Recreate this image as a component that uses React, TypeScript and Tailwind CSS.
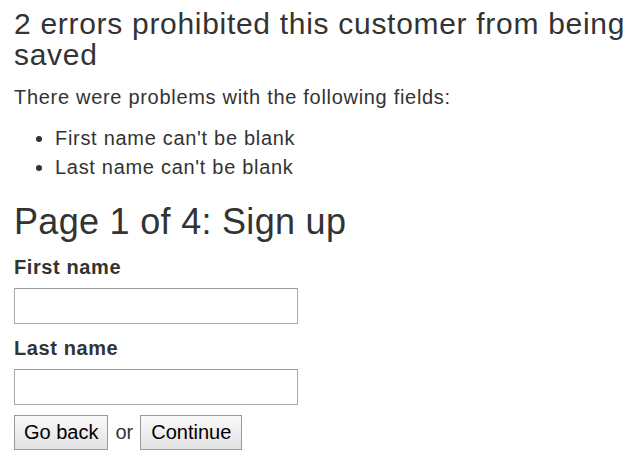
export default function App() {
  return (
    <div className="min-h-[467px] bg-white px-[14px] text-[#333] font-['Liberation_Sans',Arial,sans-serif]">
      <h1 className="pt-[8px] text-[30px] leading-[31px] tracking-[0.7px]">
        2 errors prohibited this customer from being saved
      </h1>
      <p className="mt-[13px] text-[20px] leading-[28px] tracking-[0.7px]">
        There were problems with the following fields:
      </p>
      <ul className="mt-[13px] list-disc pl-[41px] text-[20px] leading-[29px] tracking-[0.7px]">
        <li>First name can't be blank</li>
        <li>Last name can't be blank</li>
      </ul>
      <h2 className="mt-[20px] text-[36px] leading-[40px] tracking-[0.3px]">Page 1 of 4: Sign up</h2>
      <form className="flex flex-col" onSubmit={(e) => e.preventDefault()}>
        <label className="mt-[13px] text-[20px] font-bold leading-[24px] tracking-[0.6px]">First name</label>
        <input type="text" className="mt-[9px] h-[36px] w-[284px] border border-[#aaa] border-t-[#999] bg-white" />
        <label className="mt-[12px] text-[20px] font-bold leading-[24px] tracking-[0.6px]">Last name</label>
        <input type="text" className="mt-[9px] h-[36px] w-[284px] border border-[#aaa] border-t-[#999] bg-white" />
        <div className="mt-[10px] flex items-center gap-[7px] text-[20px]">
          <button type="button" className="h-[35px] border border-[#999] bg-gradient-to-b from-[#fafafa] to-[#e2e2e2] px-[9px] leading-[33px] text-black">
            Go back
          </button>
          <span className="leading-[33px]">or</span>
          <button type="submit" className="h-[35px] border border-[#999] bg-gradient-to-b from-[#fafafa] to-[#e2e2e2] px-[10px] leading-[33px] text-black">
            Continue
          </button>
        </div>
      </form>
    </div>
  );
}
